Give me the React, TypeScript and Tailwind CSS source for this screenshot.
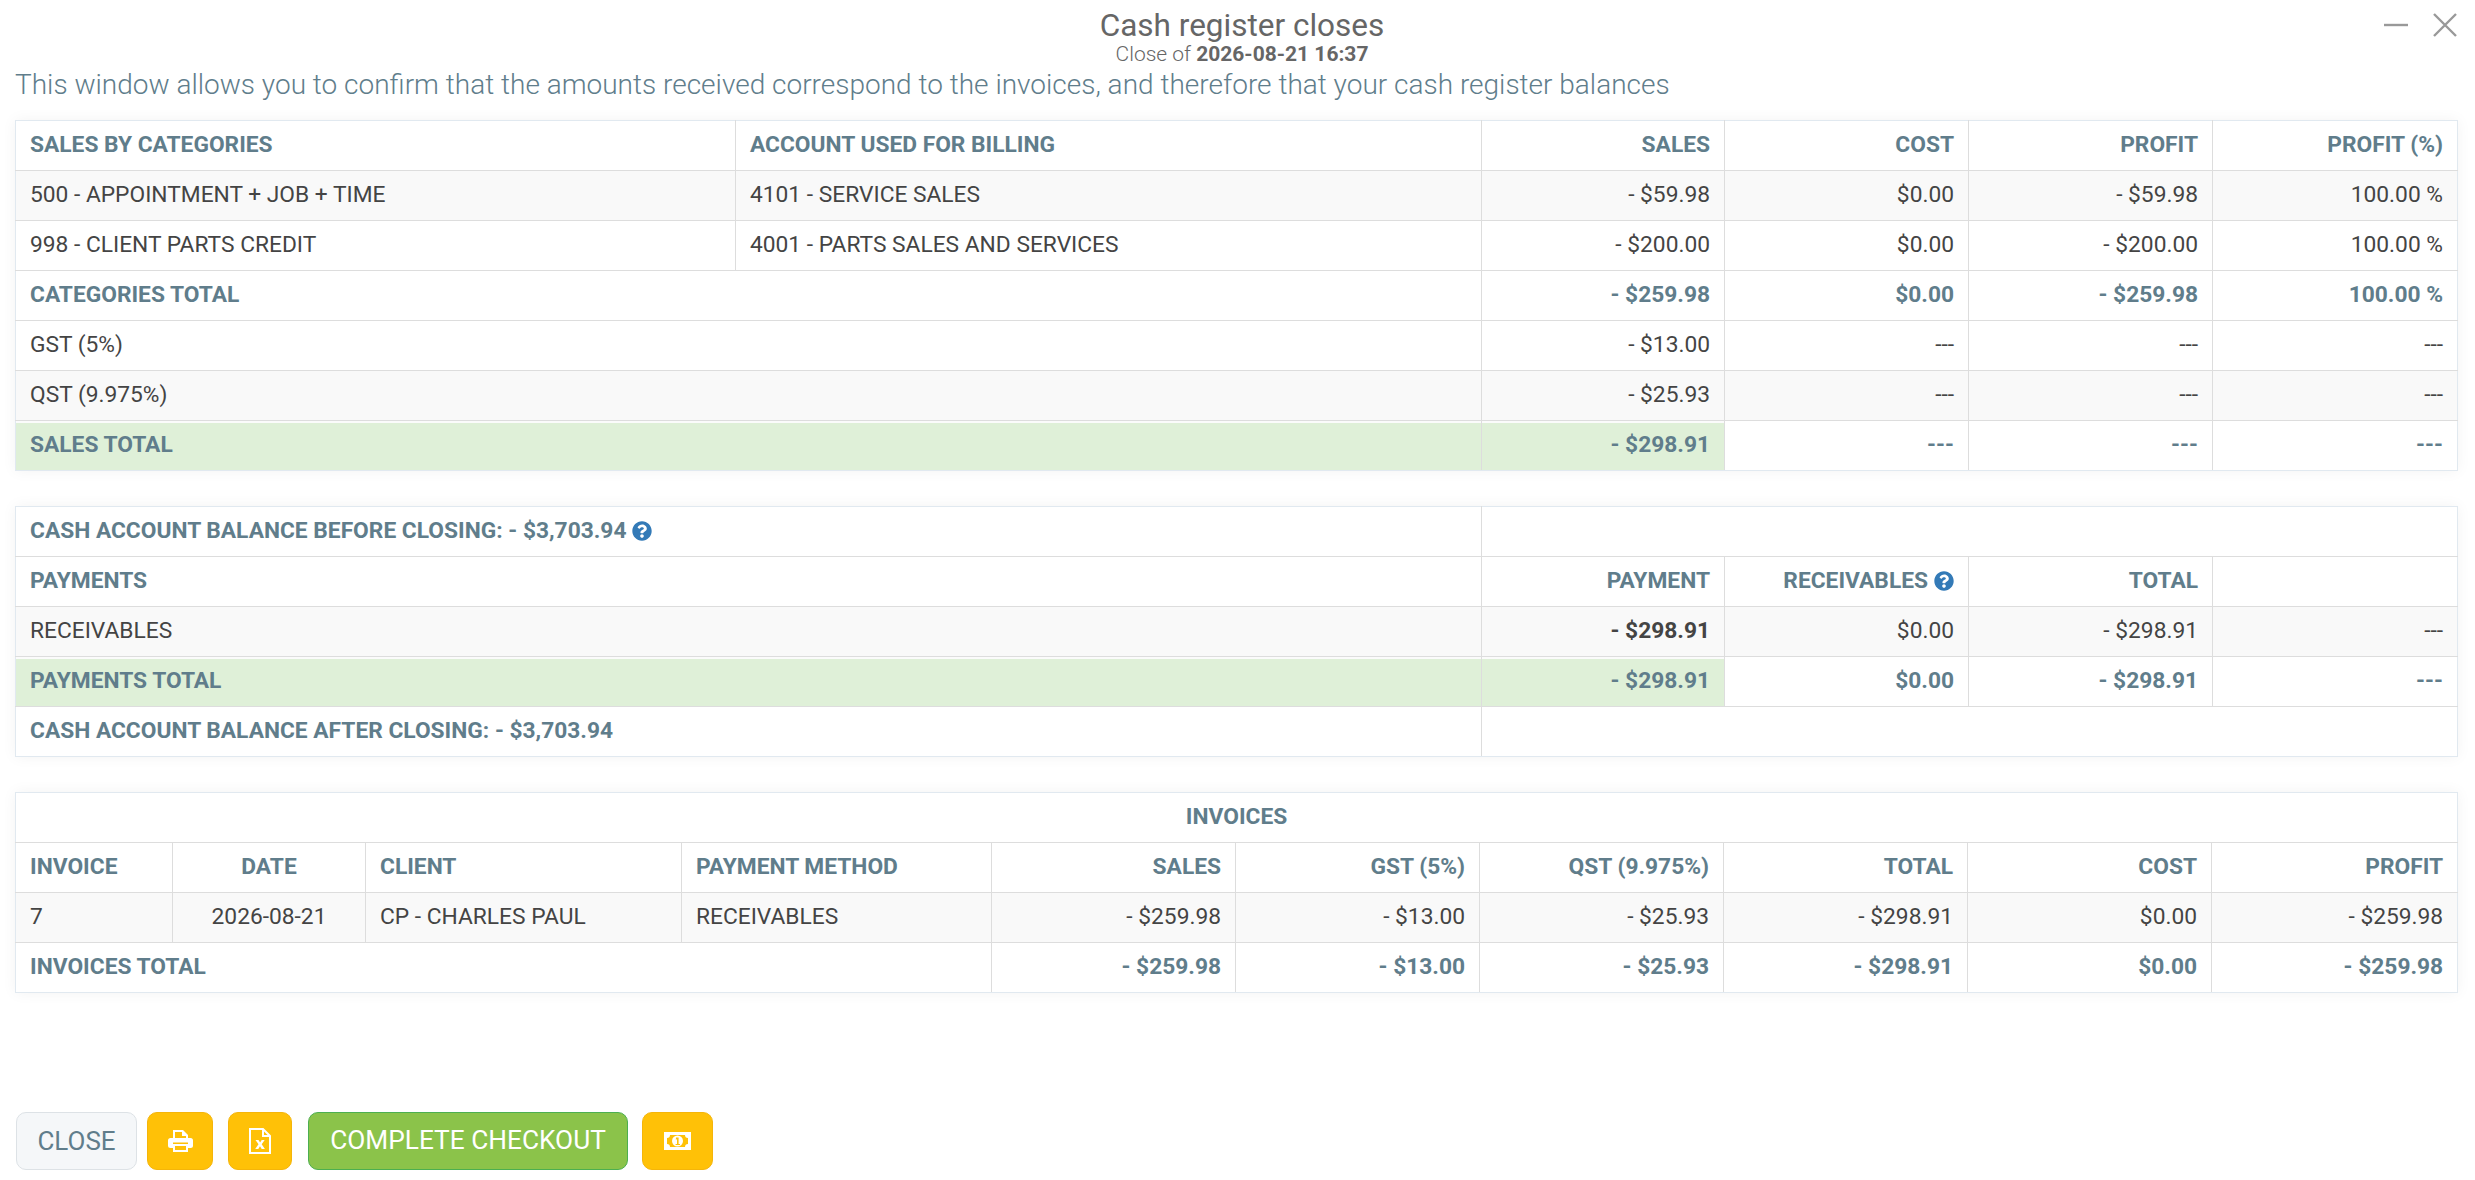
import React from "react";
import { FaQuestionCircle } from "react-icons/fa";

const B = "border border-[#dddddd] px-[14px] pb-[1px] h-[50px] align-middle whitespace-nowrap";
const H = `${B} font-bold text-[#607d8b]`;
const T = `${B} font-normal text-[#444444]`;
const G = "bg-[#dff0d8] shadow-[inset_0_2px_0_#fbfbfb]";
const S = "bg-[#f9f9f9]";

function Q() {
  return <FaQuestionCircle className="inline-block text-[#337ab7] w-[20px] h-[20px] ml-[6px] align-[-3px]" />;
}

function Table({ cols, children }: { cols: number[]; children: React.ReactNode }) {
  return (
    <table className="table-fixed border-collapse w-[2442px] bg-white text-[22.75px] leading-[26px] shadow-[0_0_14px_rgba(0,0,0,0.05)] [&_tr:first-child>*]:border-t-[#e1e9f0] [&_tr:last-child>*]:border-b-[#e1e9f0] [&_tr>*:first-child]:border-l-[#e1e9f0] [&_tr>*:last-child]:border-r-[#e1e9f0]">
      <colgroup>
        {cols.map((c, i) => (
          <col key={i} style={{ width: c }} />
        ))}
      </colgroup>
      <tbody>{children}</tbody>
    </table>
  );
}

const C1 = [720, 746, 243, 244, 244, 245];
const C2 = [1466, 243, 244, 244, 245];
const C3 = [157, 193, 316, 310, 244, 244, 244, 244, 244, 246];

function PrintIcon() {
  return (
    <svg width="25" height="22" viewBox="0 0 25 22">
      <path d="M5 0h10l5 5v5H5z" fill="#fff" />
      <path d="M7 2h7v4h4v4H7z" fill="#ffc107" />
      <rect x="0" y="8" width="25" height="10" rx="2.5" fill="#fff" />
      <rect x="5" y="12.5" width="15" height="2" fill="#ffc107" />
      <path d="M5 14h15v8H5z" fill="#fff" />
      <rect x="7" y="16" width="11" height="4" fill="#ffc107" />
    </svg>
  );
}

function ExcelIcon() {
  return (
    <svg width="22" height="26" viewBox="0 0 22 26">
      <path d="M1 1h13l7 7v17H1z" fill="none" stroke="#fff" strokeWidth="2" />
      <path d="M14 1v7h7" fill="none" stroke="#fff" strokeWidth="2" />
      <path d="M6.5 12h3l1.6 2.6L12.7 12h3l-3 4.2 3.2 4.8h-3.2l-1.7-2.8L9.3 21H6.2l3.3-4.8z" fill="#fff" />
    </svg>
  );
}

function MoneyIcon() {
  return (
    <svg width="27" height="18" viewBox="0 0 27 18">
      <path
        fillRule="evenodd"
        fill="#fff"
        d="M0 0h27v18H0zM6 3C6 5 5 6 3 6v6c2 0 3 1 3 3h15c0-2 1-3 3-3V6c-2 0-3-1-3-3z"
      />
      <circle cx="13.5" cy="9" r="5.5" fill="#fff" />
      <path d="M12 5.5h2.6V12H16v1h-4.4v-1H13V7.2l-1.2.6z" fill="#ffc107" />
    </svg>
  );
}

export default function App() {
  return (
    <div className="h-[1180px] w-full bg-white flex flex-col overflow-hidden font-['Roboto',sans-serif] relative">
      <div className="absolute left-[2384px] top-[13px] flex items-center gap-[25px]">
        <svg width="24" height="24" viewBox="0 0 24 24"><path d="M0 12h24" stroke="#999" strokeWidth="2.4" /></svg>
        <svg width="24" height="24" viewBox="0 0 24 24"><path d="M1 1l22 22M23 1L1 23" stroke="#999" strokeWidth="2.4" /></svg>
      </div>
      <div className="flex flex-col items-center pt-[8px] pl-[9px]">
        <h1 className="text-[31.5px] leading-[36px] font-normal text-[#666666]">Cash register closes</h1>
        <div className="text-[21px] leading-[20px] font-light text-[#666666]">
          Close of <span className="font-bold">2026-08-21 16:37</span>
        </div>
      </div>
      <div className="px-[15px] flex-1 flex flex-col">
        <p className="text-[28px] leading-[32px] font-light text-[#607d8b] pt-[5px] mb-[19px]">
          This window allows you to confirm that the amounts received correspond to the invoices, and therefore that your cash register balances
        </p>
        <div className="flex flex-col gap-[35px]">
          <Table cols={C1}>
            <tr>
              <th className={`${H} text-left`}>SALES BY CATEGORIES</th>
              <th className={`${H} text-left`}>ACCOUNT USED FOR BILLING</th>
              <th className={`${H} text-right`}>SALES</th>
              <th className={`${H} text-right`}>COST</th>
              <th className={`${H} text-right`}>PROFIT</th>
              <th className={`${H} text-right`}>PROFIT (%)</th>
            </tr>
            <tr className={S}>
              <td className={T}>500 - APPOINTMENT + JOB + TIME</td>
              <td className={T}>4101 - SERVICE SALES</td>
              <td className={`${T} text-right`}>- $59.98</td>
              <td className={`${T} text-right`}>$0.00</td>
              <td className={`${T} text-right`}>- $59.98</td>
              <td className={`${T} text-right`}>100.00 %</td>
            </tr>
            <tr>
              <td className={T}>998 - CLIENT PARTS CREDIT</td>
              <td className={T}>4001 - PARTS SALES AND SERVICES</td>
              <td className={`${T} text-right`}>- $200.00</td>
              <td className={`${T} text-right`}>$0.00</td>
              <td className={`${T} text-right`}>- $200.00</td>
              <td className={`${T} text-right`}>100.00 %</td>
            </tr>
            <tr>
              <td colSpan={2} className={H}>CATEGORIES TOTAL</td>
              <td className={`${H} text-right`}>- $259.98</td>
              <td className={`${H} text-right`}>$0.00</td>
              <td className={`${H} text-right`}>- $259.98</td>
              <td className={`${H} text-right`}>100.00 %</td>
            </tr>
            <tr>
              <td colSpan={2} className={T}>GST (5%)</td>
              <td className={`${T} text-right`}>- $13.00</td>
              <td className={`${T} text-right`}>---</td>
              <td className={`${T} text-right`}>---</td>
              <td className={`${T} text-right`}>---</td>
            </tr>
            <tr className={S}>
              <td colSpan={2} className={T}>QST (9.975%)</td>
              <td className={`${T} text-right`}>- $25.93</td>
              <td className={`${T} text-right`}>---</td>
              <td className={`${T} text-right`}>---</td>
              <td className={`${T} text-right`}>---</td>
            </tr>
            <tr>
              <td colSpan={2} className={`${H} ${G}`}>SALES TOTAL</td>
              <td className={`${H} ${G} text-right`}>- $298.91</td>
              <td className={`${H} text-right`}>---</td>
              <td className={`${H} text-right`}>---</td>
              <td className={`${H} text-right`}>---</td>
            </tr>
          </Table>
          <Table cols={C2}>
            <tr>
              <td className={H}>CASH ACCOUNT BALANCE BEFORE CLOSING: - $3,703.94<Q /></td>
              <td colSpan={4} className={H}></td>
            </tr>
            <tr>
              <th className={`${H} text-left`}>PAYMENTS</th>
              <th className={`${H} text-right`}>PAYMENT</th>
              <th className={`${H} text-right`}>RECEIVABLES<Q /></th>
              <th className={`${H} text-right`}>TOTAL</th>
              <th className={H}></th>
            </tr>
            <tr className={S}>
              <td className={T}>RECEIVABLES</td>
              <td className={`${T} text-right !font-bold`}>- $298.91</td>
              <td className={`${T} text-right`}>$0.00</td>
              <td className={`${T} text-right`}>- $298.91</td>
              <td className={`${T} text-right`}>---</td>
            </tr>
            <tr>
              <td className={`${H} ${G}`}>PAYMENTS TOTAL</td>
              <td className={`${H} ${G} text-right`}>- $298.91</td>
              <td className={`${H} text-right`}>$0.00</td>
              <td className={`${H} text-right`}>- $298.91</td>
              <td className={`${H} text-right`}>---</td>
            </tr>
            <tr>
              <td className={H}>CASH ACCOUNT BALANCE AFTER CLOSING: - $3,703.94</td>
              <td colSpan={4} className={H}></td>
            </tr>
          </Table>
          <Table cols={C3}>
            <tr>
              <th colSpan={10} className={`${H} text-center`}>INVOICES</th>
            </tr>
            <tr>
              <th className={`${H} text-left`}>INVOICE</th>
              <th className={`${H} text-center`}>DATE</th>
              <th className={`${H} text-left`}>CLIENT</th>
              <th className={`${H} text-left`}>PAYMENT METHOD</th>
              <th className={`${H} text-right`}>SALES</th>
              <th className={`${H} text-right`}>GST (5%)</th>
              <th className={`${H} text-right`}>QST (9.975%)</th>
              <th className={`${H} text-right`}>TOTAL</th>
              <th className={`${H} text-right`}>COST</th>
              <th className={`${H} text-right`}>PROFIT</th>
            </tr>
            <tr className={S}>
              <td className={T}>7</td>
              <td className={`${T} text-center`}>2026-08-21</td>
              <td className={T}>CP - CHARLES PAUL</td>
              <td className={T}>RECEIVABLES</td>
              <td className={`${T} text-right`}>- $259.98</td>
              <td className={`${T} text-right`}>- $13.00</td>
              <td className={`${T} text-right`}>- $25.93</td>
              <td className={`${T} text-right`}>- $298.91</td>
              <td className={`${T} text-right`}>$0.00</td>
              <td className={`${T} text-right`}>- $259.98</td>
            </tr>
            <tr>
              <td colSpan={4} className={H}>INVOICES TOTAL</td>
              <td className={`${H} text-right`}>- $259.98</td>
              <td className={`${H} text-right`}>- $13.00</td>
              <td className={`${H} text-right`}>- $25.93</td>
              <td className={`${H} text-right`}>- $298.91</td>
              <td className={`${H} text-right`}>$0.00</td>
              <td className={`${H} text-right`}>- $259.98</td>
            </tr>
          </Table>
        </div>
      </div>
      <div className="flex items-center pl-[16px] pb-[10px]">
        <button className="h-[58px] w-[121px] rounded-[10px] border border-[#dde2e6] bg-[#f5f7f9] text-[#607d8b] font-normal text-[26px] whitespace-nowrap">CLOSE</button>
        <button className="h-[58px] w-[66px] ml-[10px] rounded-[10px] bg-[#ffc107] border border-[#f5b50a] flex items-center justify-center"><PrintIcon /></button>
        <button className="h-[58px] w-[64px] ml-[15px] rounded-[10px] bg-[#ffc107] border border-[#f5b50a] flex items-center justify-center"><ExcelIcon /></button>
        <button className="h-[58px] w-[320px] ml-[16px] rounded-[10px] bg-[#8bc34a] border border-[#4caf50] text-white font-normal text-[26.25px] whitespace-nowrap">COMPLETE CHECKOUT</button>
        <button className="h-[58px] w-[71px] ml-[14px] rounded-[10px] bg-[#ffc107] border border-[#f5b50a] flex items-center justify-center"><MoneyIcon /></button>
      </div>
    </div>
  );
}
